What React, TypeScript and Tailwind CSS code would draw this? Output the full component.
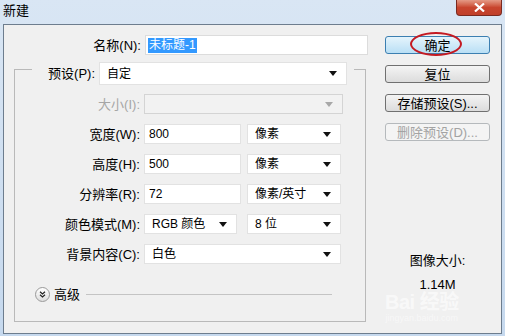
import React from 'react';

const font = "font-['Liberation_Sans','Noto_Sans_CJK_SC',sans-serif]";

const Arrow: React.FC<{ disabled?: boolean }> = ({ disabled }) => (
  <svg width="8" height="5" viewBox="0 0 8 5" className="shrink-0">
    <path d="M0 0h8L4 5z" fill={disabled ? '#a8a8a8' : '#111'} />
  </svg>
);

const Select: React.FC<{ value?: string; width: string; disabled?: boolean; tall?: boolean }> = ({ value, width, disabled, tall }) => (
  <div
    className={`${width} ${tall ? 'h-[23px]' : 'h-[20px]'} flex items-center justify-between pl-[7px] pr-[9px] border ${
      disabled ? 'bg-[#f2f2f2] border-[#d4d4d4]' : 'bg-white border-[#e2e2e2]'
    }`}
  >
    <span className="text-[12px] leading-none text-black">{value}</span>
    <Arrow disabled={disabled} />
  </div>
);

const Input: React.FC<{ value: string; width: string }> = ({ value, width }) => (
  <div className={`${width} h-[20px] flex items-center pl-[4px] bg-white border border-[#e2e2e2]`}>
    <span className="text-[12px] leading-none text-black">{value}</span>
  </div>
);

const Row: React.FC<{ label: string; disabled?: boolean; children: React.ReactNode }> = ({ label, disabled, children }) => (
  <div className="flex items-center h-[20px]">
    <div className={`w-[125px] text-right text-[13px] leading-none ${disabled ? 'text-[#a6a6a6]' : 'text-black'}`}>{label}</div>
    <div className="ml-[4px] flex items-center gap-[6px]">{children}</div>
  </div>
);

const Button: React.FC<{ label: string; primary?: boolean; disabled?: boolean }> = ({ label, primary, disabled }) => (
  <div
    className={`w-[105px] h-[18px] rounded-[3px] border flex items-center justify-center text-[13px] leading-none ${
      primary
        ? 'border-[#3c7fb1] bg-gradient-to-b from-[#e5f4fc] to-[#b9dff5] text-black'
        : disabled
        ? 'border-[#b5b9bc] bg-[#f4f4f4] text-[#a3a3a3]'
        : 'border-[#707070] bg-gradient-to-b from-[#f4f4f4] to-[#dcdcdc] text-black'
    }`}
  >
    {label}
  </div>
);

export default function App() {
  return (
    <div className={`w-[505px] h-[336px] relative overflow-hidden bg-gradient-to-b from-[#d9e6f4] to-[#c6d9ee] ${font}`}>
      {/* Title bar */}
      <div className="h-[24px] flex items-start justify-between pl-[3px] pr-[3px]">
        <span className="mt-[3px] text-[13px] leading-[16px] text-black">新建</span>
        <div className="w-[46px] h-[16px] rounded-b-[4px] border border-t-0 border-[#7a2a20] bg-gradient-to-b from-[#e49a86] via-[#c8452e] to-[#c0402a] flex items-center justify-center">
          <svg width="11" height="9" viewBox="0 0 11 9">
            <path d="M1 0.5L10 8.5M10 0.5L1 8.5" stroke="#fff" strokeWidth="2.2" />
          </svg>
        </div>
      </div>

      {/* Body */}
      <div className="mx-[3px] h-[310px] border border-[#6d7d8e] bg-[#f0f0f0] flex">
        {/* Left column */}
        <div className="w-[373px] flex flex-col">
          <div className="mt-[10px] flex items-center h-[20px]">
            <div className="w-[137px] text-right text-[13px] leading-none text-black">名称(N):</div>
            <div className="ml-[4px] w-[223px] h-[20px] flex items-center pl-[2px] bg-white border border-[#dcdcdc]">
              <span className="text-[12px] leading-[15px] px-[1px] bg-[#3399ff] text-white">未标题-1</span>
            </div>
          </div>

          {/* Group box */}
          <div className="ml-[10px] mt-[14px] w-[352px] h-[253px] border border-[#b9b9b9] flex flex-col">
            <div className="-mt-[8px] ml-[17px] w-[322px] flex items-center bg-[#f0f0f0] pr-[5px]">
              <div className="w-[63px] text-right text-[13px] leading-none text-black">预设(P):</div>
              <div className="ml-[4px]">
                <Select value="自定" width="w-[248px]" tall />
              </div>
            </div>

            <div className="mt-[9px] flex flex-col gap-[10px]">
              <Row label="大小(I):" disabled>
                <Select width="w-[199px]" disabled />
              </Row>
              <Row label="宽度(W):">
                <Input value="800" width="w-[97px]" />
                <Select value="像素" width="w-[94px]" />
              </Row>
              <Row label="高度(H):">
                <Input value="500" width="w-[97px]" />
                <Select value="像素" width="w-[94px]" />
              </Row>
              <Row label="分辨率(R):">
                <Input value="72" width="w-[97px]" />
                <Select value="像素/英寸" width="w-[94px]" />
              </Row>
              <Row label="颜色模式(M):">
                <Select value="RGB 颜色" width="w-[93px]" />
                <div className="ml-[4px]">
                  <Select value="8 位" width="w-[94px]" />
                </div>
              </Row>
              <Row label="背景内容(C):">
                <Select value="白色" width="w-[197px]" />
              </Row>
            </div>

            <div className="mt-[23px] ml-[20px] flex items-center">
              <div className="w-[15px] h-[15px] rounded-full border border-[#9a9a9a] bg-gradient-to-b from-white to-[#dedede] flex items-center justify-center">
                <svg width="7" height="7" viewBox="0 0 7 7">
                  <path d="M1 0.8L3.5 3L6 0.8M1 3.8L3.5 6L6 3.8" stroke="#222" strokeWidth="1.2" fill="none" />
                </svg>
              </div>
              <span className="ml-[4px] text-[13px] leading-none text-black">高级</span>
              <div className="ml-[6px] w-[246px] border-t border-[#c4c4c4]" />
            </div>
          </div>
        </div>

        {/* Right column */}
        <div className="ml-[8px] flex flex-col">
          <div className="mt-[11px] relative">
            <Button label="确定" primary />
            <div className="absolute left-[25px] -top-[4px] w-[52px] h-[24px] rounded-[50%] border-[2.5px] border-[#c41a22]" />
          </div>
          <div className="mt-[11px]">
            <Button label="复位" />
          </div>
          <div className="mt-[11px]">
            <Button label="存储预设(S)..." />
          </div>
          <div className="mt-[11px]">
            <Button label="删除预设(D)..." disabled />
          </div>
          <div className="mt-[113px] flex flex-col items-center">
            <span className="text-[13px] leading-none text-black">图像大小:</span>
            <span className="mt-[11px] text-[13px] leading-none text-black">1.14M</span>
          </div>
        </div>
      </div>

      {/* Watermark */}
      <div className="absolute left-[385px] top-[292px] flex flex-col items-center pointer-events-none">
        <span className="text-[20px] leading-none font-bold text-white/60 tracking-tight">Bai 经验</span>
        <span className="mt-[2px] text-[9px] leading-none text-white/50">jingyan.baidu.com</span>
      </div>
    </div>
  );
}
